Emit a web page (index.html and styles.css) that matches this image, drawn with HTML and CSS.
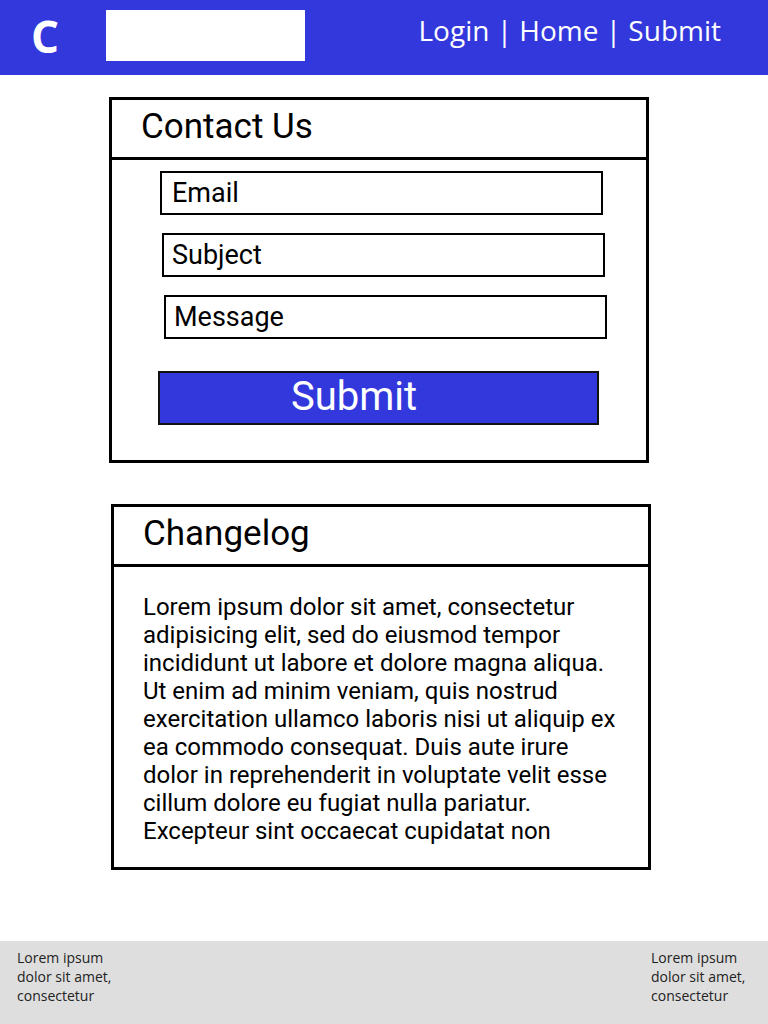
FILE: index.html
```html
<!DOCTYPE html>
<html>
<head>
<meta charset="utf-8">
<link rel="stylesheet" href="styles.css">
</head>
<body>
<div class="page">
  <header class="topbar">
    <div class="logo">C</div>
    <div class="search"></div>
    <nav class="nav">Login | Home | Submit</nav>
  </header>
  <main class="main">
    <section class="card card-contact">
      <div class="card-head">Contact Us</div>
      <div class="card-body form">
        <div class="field field-1">Email</div>
        <div class="field field-2">Subject</div>
        <div class="field field-3">Message</div>
        <div class="submit">Submit</div>
      </div>
    </section>
    <section class="card card-log">
      <div class="card-head">Changelog</div>
      <div class="card-body log">Lorem ipsum dolor sit amet, consectetur adipisicing elit, sed do eiusmod tempor incididunt ut labore et dolore magna aliqua. Ut enim ad minim veniam, quis nostrud exercitation ullamco laboris nisi ut aliquip ex ea commodo consequat. Duis aute irure dolor in reprehenderit in voluptate velit esse cillum dolore eu fugiat nulla pariatur. Excepteur sint occaecat cupidatat non</div>
    </section>
  </main>
  <footer class="footer">
    <div class="foot-col">Lorem ipsum dolor sit amet, consectetur</div>
    <div class="foot-col">Lorem ipsum dolor sit amet, consectetur</div>
  </footer>
</div>
</body>
</html>
```

FILE: styles.css
```css
html, body {
  margin: 0;
  padding: 0;
  background: #fff;
}
.page {
  display: flex;
  flex-direction: column;
  min-height: 1024px;
}
.topbar {
  height: 75px;
  background: #3338dd;
  display: flex;
  align-items: flex-start;
  font-family: "Open Sans", sans-serif;
  color: #fff;
}
.logo {
  font-weight: 700;
  font-size: 44px;
  line-height: 44px;
  margin: 14px 0 0 31px;
  width: 40px;
}
.search {
  width: 199px;
  height: 51px;
  background: #fff;
  margin: 10px 0 0 35px;
}
.nav {
  margin: 11px 47px 0 auto;
  font-size: 28px;
  line-height: 38px;
}
.main {
  display: flex;
  flex-direction: column;
  padding-top: 22px;
}
.card {
  width: 534px;
  border: 3px solid #000;
  font-family: Roboto, sans-serif;
  color: #000;
}
.card-contact {
  margin-left: 109px;
  height: 360px;
}
.card-log {
  margin-left: 111px;
  margin-top: 41px;
  height: 360px;
}
.card-head {
  height: 57px;
  border-bottom: 3px solid #000;
  font-size: 35px;
  line-height: 54px;
  padding-left: 29px;
}
.form {
  display: flex;
  flex-direction: column;
  padding-top: 11px;
}
.field {
  height: 40px;
  border: 2px solid #000;
  font-size: 27px;
  line-height: 40px;
  padding-left: 10px;
  width: 429px;
}
.field-1 { margin-left: 48px; }
.field-2 { margin-left: 50px; margin-top: 18px; padding-left: 8px; width: 431px; }
.field-3 { margin-left: 52px; margin-top: 18px; padding-left: 8px; width: 431px; }
.submit {
  margin: 32px 0 0 46px;
  height: 50px;
  border: 2px solid #111;
  background: #3338dd;
  color: #fff;
  font-size: 40px;
  line-height: 48px;
  padding-left: 131px;
  width: 306px;
}
.log {
  padding: 26px 24px 0 29px;
  font-size: 24px;
  line-height: 28px;
}
.footer {
  margin-top: auto;
  height: 83px;
  box-sizing: border-box;
  background: #dedede;
  display: flex;
  justify-content: space-between;
  padding: 7px 17px 0 17px;
  font-family: "Open Sans", sans-serif;
  font-size: 14px;
  line-height: 19px;
  color: #222;
}
.foot-col {
  width: 100px;
}
```
